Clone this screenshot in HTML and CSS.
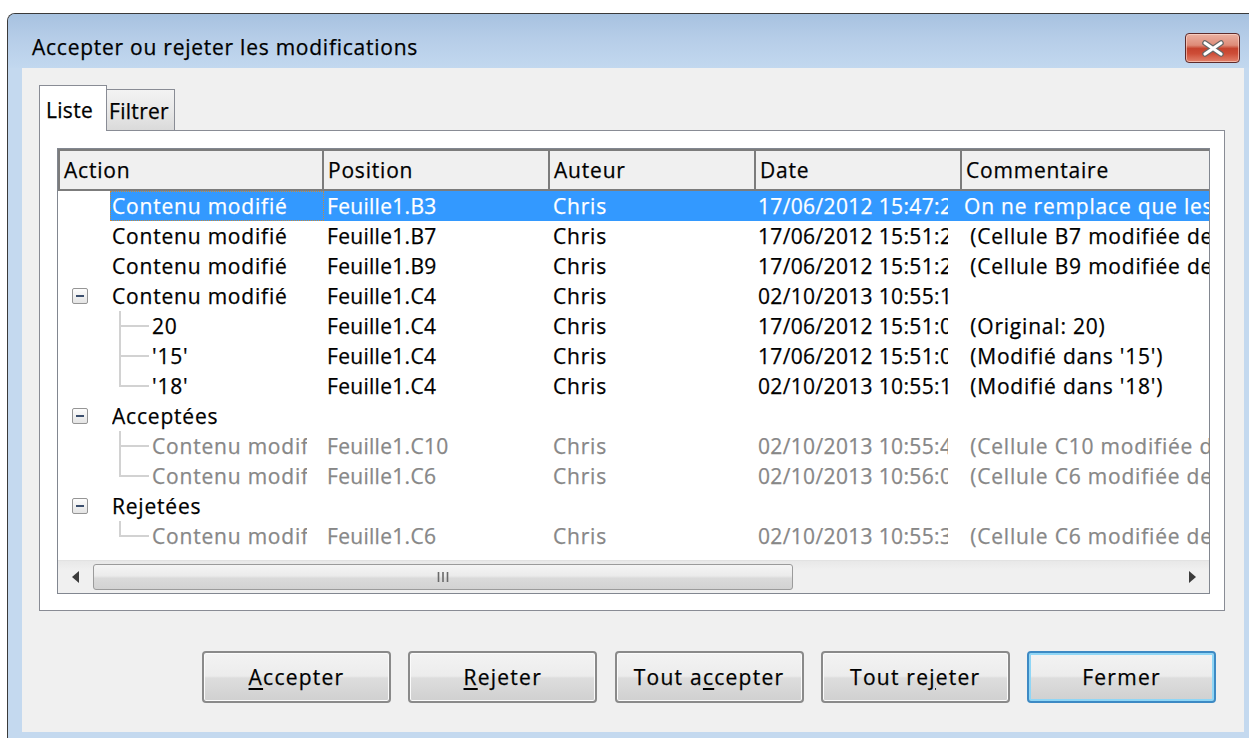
FILE: index.html
```html
<!DOCTYPE html>
<html lang="fr">
<head>
<meta charset="utf-8">
<title>Accepter ou rejeter les modifications</title>
<link rel="stylesheet" href="styles.css">
</head>
<body>
<div class="window">
  <div class="titlebar">
    <span class="title">Accepter ou rejeter les modifications</span>
    <button class="close" aria-label="Fermer">
      <svg width="24" height="17" viewBox="0 0 24 17">
        <path d="M4 3 L20 14 M20 3 L4 14" stroke="#666666" stroke-width="5.6" stroke-linecap="round" fill="none"/>
        <path d="M4 3 L20 14 M20 3 L4 14" stroke="#ffffff" stroke-width="3.2" stroke-linecap="round" fill="none"/>
      </svg>
    </button>
  </div>

  <div class="client">
    <div class="tabs">
      <div class="tab active">Liste</div>
      <div class="tab">Filtrer</div>
    </div>

    <div class="panel">
      <div class="listbox">
        <div class="header">
          <div class="h">Action</div>
          <div class="h">Position</div>
          <div class="h">Auteur</div>
          <div class="h">Date</div>
          <div class="h">Commentaire</div>
        </div>

        <div class="rows">
          <div class="row sel">
            <div class="act"><span class="twist"></span><span class="lbl"><span>Contenu modifié</span></span></div>
            <div class="c pos"><span>Feuille1.B3</span></div>
            <div class="c aut"><span>Chris</span></div>
            <div class="c dat"><span>17/06/2012 15:47:25</span></div>
            <div class="c com"><span>On ne remplace que les cellules vides</span></div>
          </div>
          <div class="row">
            <div class="act"><span class="twist"></span><span class="lbl"><span>Contenu modifié</span></span></div>
            <div class="c pos"><span>Feuille1.B7</span></div>
            <div class="c aut"><span>Chris</span></div>
            <div class="c dat"><span>17/06/2012 15:51:22</span></div>
            <div class="c com"><span> (Cellule B7 modifiée de '' en '12')</span></div>
          </div>
          <div class="row">
            <div class="act"><span class="twist"></span><span class="lbl"><span>Contenu modifié</span></span></div>
            <div class="c pos"><span>Feuille1.B9</span></div>
            <div class="c aut"><span>Chris</span></div>
            <div class="c dat"><span>17/06/2012 15:51:22</span></div>
            <div class="c com"><span> (Cellule B9 modifiée de '' en '7')</span></div>
          </div>
          <div class="row">
            <div class="act"><span class="twist open"></span><span class="lbl"><span>Contenu modifié</span></span></div>
            <div class="c pos"><span>Feuille1.C4</span></div>
            <div class="c aut"><span>Chris</span></div>
            <div class="c dat"><span>02/10/2013 10:55:12</span></div>
            <div class="c com"><span></span></div>
          </div>
          <div class="row">
            <div class="act"><span class="twist"></span><span class="branch"></span><span class="lbl child"><span>20</span></span></div>
            <div class="c pos"><span>Feuille1.C4</span></div>
            <div class="c aut"><span>Chris</span></div>
            <div class="c dat"><span>17/06/2012 15:51:02</span></div>
            <div class="c com"><span> (Original: 20)</span></div>
          </div>
          <div class="row">
            <div class="act"><span class="twist"></span><span class="branch"></span><span class="lbl child"><span>'15'</span></span></div>
            <div class="c pos"><span>Feuille1.C4</span></div>
            <div class="c aut"><span>Chris</span></div>
            <div class="c dat"><span>17/06/2012 15:51:02</span></div>
            <div class="c com"><span> (Modifié dans '15')</span></div>
          </div>
          <div class="row">
            <div class="act"><span class="twist"></span><span class="branch last"></span><span class="lbl child"><span>'18'</span></span></div>
            <div class="c pos"><span>Feuille1.C4</span></div>
            <div class="c aut"><span>Chris</span></div>
            <div class="c dat"><span>02/10/2013 10:55:12</span></div>
            <div class="c com"><span> (Modifié dans '18')</span></div>
          </div>
          <div class="row">
            <div class="act"><span class="twist open"></span><span class="lbl"><span>Acceptées</span></span></div>
          </div>
          <div class="row done">
            <div class="act"><span class="twist"></span><span class="branch"></span><span class="lbl child"><span>Contenu modifié</span></span></div>
            <div class="c pos"><span>Feuille1.C10</span></div>
            <div class="c aut"><span>Chris</span></div>
            <div class="c dat"><span>02/10/2013 10:55:41</span></div>
            <div class="c com"><span> (Cellule C10 modifiée de '' en '3')</span></div>
          </div>
          <div class="row done">
            <div class="act"><span class="twist"></span><span class="branch last"></span><span class="lbl child"><span>Contenu modifié</span></span></div>
            <div class="c pos"><span>Feuille1.C6</span></div>
            <div class="c aut"><span>Chris</span></div>
            <div class="c dat"><span>02/10/2013 10:56:02</span></div>
            <div class="c com"><span> (Cellule C6 modifiée de '' en '5')</span></div>
          </div>
          <div class="row">
            <div class="act"><span class="twist open"></span><span class="lbl"><span>Rejetées</span></span></div>
          </div>
          <div class="row done">
            <div class="act"><span class="twist"></span><span class="branch last"></span><span class="lbl child"><span>Contenu modifié</span></span></div>
            <div class="c pos"><span>Feuille1.C6</span></div>
            <div class="c aut"><span>Chris</span></div>
            <div class="c dat"><span>02/10/2013 10:55:31</span></div>
            <div class="c com"><span> (Cellule C6 modifiée de '' en '4')</span></div>
          </div>
        </div>

        <div class="hscroll">
          <span class="arrow">
            <svg width="8" height="12" viewBox="0 0 8 12"><path d="M7 0 L0 6 L7 12 Z" fill="#3c3c3c"/></svg>
          </span>
          <span class="thumb">
            <svg width="12" height="10" viewBox="0 0 12 10"><path d="M1.5 0 V10 M6 0 V10 M10.5 0 V10" stroke="#6a6a6a" stroke-width="1.6"/></svg>
          </span>
          <span class="track"></span>
          <span class="arrow">
            <svg width="8" height="12" viewBox="0 0 8 12"><path d="M1 0 L8 6 L1 12 Z" fill="#3c3c3c"/></svg>
          </span>
        </div>
      </div>
    </div>

    <div class="actions">
      <button class="btn"><u>A</u>ccepter</button>
      <button class="btn"><u>R</u>ejeter</button>
      <button class="btn">Tout a<u>c</u>cepter</button>
      <button class="btn">Tout re<u>j</u>eter</button>
      <button class="btn default">Fermer</button>
    </div>
  </div>
</div>
</body>
</html>
```

FILE: styles.css
```css
html, body {
  margin: 0;
  height: 100%;
  overflow: hidden;
  background: #ffffff;
}

body {
  font-family: "Open Sans", "Noto Sans", sans-serif;
  font-size: 21px;
  letter-spacing: 0.8px;
  color: #000;
  -webkit-text-stroke: 0.25px currentColor;
}

/* ---------- window frame ---------- */
.window {
  margin: 13px 0 0 7px;
  width: 1250px;
  border: 1px solid #3a3a3a;
  border-bottom: 0;
  border-radius: 8px 8px 0 0;
  background: #c4d9ef;
  padding-bottom: 20px;
}

.titlebar {
  height: 54px;
  display: flex;
  align-items: flex-start;
  padding-left: 24px;
  border-radius: 7px 7px 0 0;
  background: linear-gradient(#a7c2e0, #b6cde8 45%, #c2d8ef);
}

.title {
  margin-top: 19px;
  line-height: 28px;
  letter-spacing: 0.75px;
  font-size: 21px;
}

.close {
  margin: 19px 18px 0 auto;
  width: 55px;
  height: 30px;
  padding: 0;
  display: flex;
  align-items: center;
  justify-content: center;
  border: 1px solid #5e2b2b;
  border-radius: 4px;
  background: linear-gradient(#eab1a2, #de8b78 40%, #c6432e 52%, #cd4d37 70%, #e2826c);
  box-shadow: inset 0 0 0 1px rgba(255, 220, 210, 0.6);
}

.client {
  margin: 0 14px;
  height: 664px;
  background: #f0f0f0;
  display: flex;
  flex-direction: column;
}

/* ---------- tabs ---------- */
.tabs {
  display: flex;
  align-items: flex-end;
  height: 45px;
  margin: 17px 0 0 17px;
  position: relative;
  z-index: 1;
}

.tab {
  box-sizing: border-box;
  height: 41px;
  width: 68px;
  padding: 6px 0 0 2px;
  line-height: 30px;
  letter-spacing: 0.3px;
  border: 1px solid #898c95;
  border-left: 0;
  border-bottom: 0;
  background: linear-gradient(#f3f3f3, #e9e9e9 50%, #dadada);
}

.tab.active {
  height: 46px;
  width: 68px;
  margin-bottom: -1px;
  padding: 9px 0 0 6px;
  border-left: 1px solid #898c95;
  background: #ffffff;
}

/* ---------- tab page ---------- */
.panel {
  box-sizing: border-box;
  margin-left: 17px;
  width: 1186px;
  height: 481px;
  padding: 17px 0 0 17px;
  border: 1px solid #898c95;
  background: #ffffff;
}

.listbox {
  box-sizing: border-box;
  width: 1153px;
  height: 446px;
  border: 1px solid #828790;
  display: flex;
  flex-direction: column;
  overflow: hidden;
}

.header,
.row {
  display: grid;
  grid-template-columns: 266px 226px 206px 206px 247px;
}

.header {
  height: 42px;
}

.h {
  box-sizing: border-box;
  padding-left: 4px;
  line-height: 38px;
  background: #f0f0f0;
  border: 2px solid #7c7c7c;
  border-left: 0;
}

.h:first-child {
  border-left: 2px solid #7c7c7c;
}

.h:last-child {
  border-right: 0;
}

.row {
  height: 30px;
  line-height: 30px;
}

.act {
  display: flex;
  min-width: 0;
}

.twist {
  flex: none;
  width: 16px;
  margin: 0 22px 0 14px;
}

.twist.open {
  box-sizing: border-box;
  height: 16px;
  align-self: center;
  border: 1px solid #959595;
  border-radius: 2px;
  background:
    linear-gradient(#3c4f6e, #3c4f6e) no-repeat center / 8px 2px,
    linear-gradient(#fdfdfd, #e4e4e4);
}

/* tree connectors: vertical stem plus a horizontal tick to the label */
.branch {
  flex: none;
  width: 40px;
  background:
    linear-gradient(#d2d2d2, #d2d2d2) no-repeat 9px 0 / 2px 100%,
    linear-gradient(#d2d2d2, #d2d2d2) no-repeat 9px 50% / 30px 2px;
}

.branch.last {
  background:
    linear-gradient(#d2d2d2, #d2d2d2) no-repeat 9px 0 / 2px 50%,
    linear-gradient(#d2d2d2, #d2d2d2) no-repeat 9px 50% / 30px 2px;
}

.lbl {
  flex: 1;
  min-width: 0;
  padding: 0 17px 0 2px;
}

.lbl > span,
.c > span {
  display: block;
  overflow: hidden;
  white-space: pre;
}

.c {
  min-width: 0;
  padding: 0 14px 0 2px;
}

.c.pos,
.c.aut {
  padding-left: 3px;
}

.c.pos {
  letter-spacing: 0.3px;
}

.c.dat {
  letter-spacing: 0.35px;
}

.c.com {
  padding-right: 0;
}

.row.sel .lbl,
.row.sel .c {
  background: #3399ff;
  color: #ffffff;
}

.row.sel .lbl {
  outline: 1px dotted #c98a3a;
  outline-offset: -1px;
}

.row.done {
  color: #878787;
}

/* ---------- horizontal scrollbar ---------- */
.hscroll {
  margin-top: auto;
  height: 32px;
  display: flex;
  align-items: center;
  border-top: 1px solid #e2e2e2;
  background: linear-gradient(#e8e8e8, #f0f0f0 30%, #f0f0f0);
}

.arrow {
  flex: none;
  width: 35px;
  display: flex;
  justify-content: center;
}

.thumb {
  flex: none;
  box-sizing: border-box;
  width: 700px;
  height: 26px;
  display: flex;
  align-items: center;
  justify-content: center;
  border: 1px solid #9b9b9b;
  border-radius: 3px;
  background: linear-gradient(#f5f5f5, #ebebeb 45%, #dadada 55%, #d2d2d2);
}

.track {
  flex: 1;
}

/* ---------- dialog buttons ---------- */
.actions {
  display: flex;
  gap: 17.25px;
  margin: 40px 0 0 180px;
}

.btn {
  box-sizing: border-box;
  width: 189px;
  height: 52px;
  padding: 0;
  font: inherit;
  letter-spacing: 1.25px;
  color: #000;
  border: 2px solid #8a8a8a;
  border-radius: 4px;
  background: linear-gradient(#f3f3f3, #ececec 48%, #dddddd 52%, #d0d0d0);
  box-shadow: inset 0 0 0 1px #fbfbfb;
}

.btn u {
  text-underline-offset: 3px;
}

.btn.default {
  border-color: #3d8ac4;
  box-shadow: inset 0 0 0 2px #8fd6f6;
}
```
